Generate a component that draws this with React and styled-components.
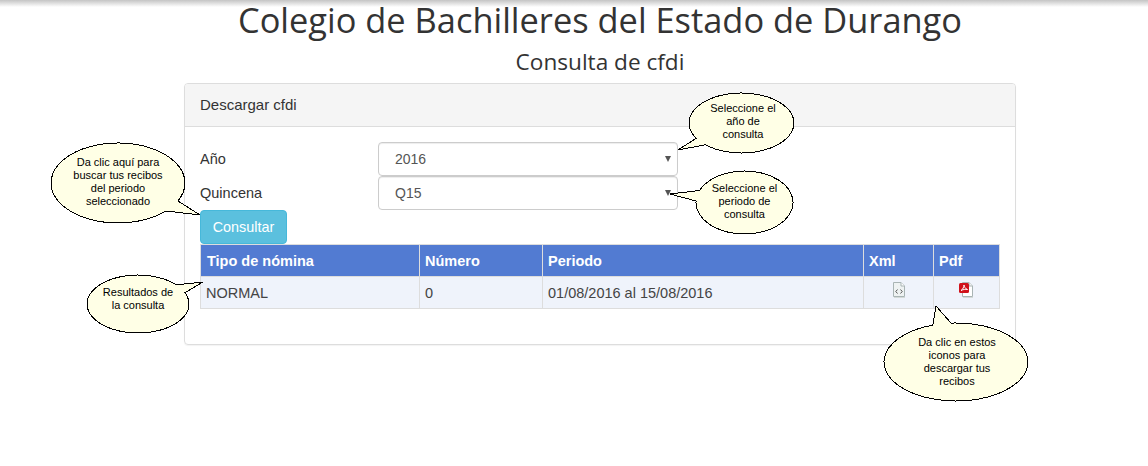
import React from "react";
import styled, { createGlobalStyle } from "styled-components";

const Global = createGlobalStyle`
  html, body { margin: 0; padding: 0; background: #fff; }
  body { font-family: "Liberation Sans", Arial, sans-serif; font-size: 14.5px; color: #333; overflow: hidden; }
  * { box-sizing: border-box; }
`;

const Page = styled.div`
  position: relative;
  width: 1148px;
  height: 466px;
  overflow: hidden;
  padding-left: 184px;
`;
const TopShade = styled.div`
  position: absolute;
  left: 0; right: 0; top: 0;
  height: 7px;
  background: linear-gradient(#c4c4c4, #fff);
`;
const Column = styled.main`
  width: 832px;
`;
const Title = styled.h1`
  margin: 0;
  height: 43px;
  font-family: "Open Sans", sans-serif;
  font-weight: 400;
  font-size: 34.4px;
  line-height: 40px;
  text-align: center;
  color: #333;
  white-space: nowrap;
`;
const Subtitle = styled.h2`
  margin: 0 0 5px;
  height: 35px;
  font-family: "Open Sans", sans-serif;
  font-weight: 400;
  font-size: 22.6px;
  line-height: 38px;
  text-align: center;
  color: #333;
`;
const Panel = styled.section`
  height: 262px;
  border: 1px solid #ddd;
  border-radius: 4px;
  box-shadow: 0 1px 1px rgba(0,0,0,.05);
`;
const PanelHead = styled.div`
  height: 43px;
  padding: 0 15px;
  font-size: 15px;
  line-height: 42px;
  background: #f5f5f5;
  border-bottom: 1px solid #ddd;
  border-radius: 3px 3px 0 0;
`;
const PanelBody = styled.div`
  padding: 15px 15px 0;
`;
const FormRow = styled.div`
  display: flex;
  align-items: center;
  height: 34px;
`;
const Label = styled.label`
  width: 178px;
  flex: none;
`;
const SelectWrap = styled.div`
  position: relative;
  width: 300px;
  height: 34px;
  &::after {
    content: "";
    position: absolute;
    right: 7px;
    top: 14px;
    border-left: 3px solid transparent;
    border-right: 3px solid transparent;
    border-top: 6px solid #555;
  }
`;
const Select = styled.select`
  appearance: none;
  display: block;
  width: 100%;
  height: 100%;
  padding: 0 16px;
  font: inherit;
  font-size: 14px;
  color: #555;
  background: #fff;
  border: 1px solid #ccc;
  border-radius: 4px;
  box-shadow: inset 0 1px 1px rgba(0,0,0,.075);
`;
const Button = styled.button`
  display: block;
  width: 87px;
  height: 34px;
  padding: 0;
  font: inherit;
  font-size: 14.4px;
  color: #fff;
  background: #5bc0de;
  border: 1px solid #46b8da;
  border-radius: 4px;
`;
const Table = styled.table`
  width: 800px;
  border-collapse: collapse;
  table-layout: fixed;
  border: 1px solid #ddd;
`;
const Th = styled.th`
  height: 32px;
  padding: 0 5px;
  text-align: left;
  font-weight: 700;
  color: #fff;
  background: #527bd2;
  border: 1px solid #ddd;
  border-top: 0;
  &:first-child { padding-left: 6px; }
`;
const Td = styled.td`
  height: 32px;
  padding: 0 5px;
  background: #eff3fb;
  border: 1px solid #ddd;
  color: #444;
`;
const IconCell = styled(Td)`
  text-align: center;
  vertical-align: top;
  padding-top: 5px;
`;
const IconLink = styled.a`
  display: inline-block;
  line-height: 0;
`;
const Bubble = styled.div`
  position: absolute;
  left: ${p => p.$cx - p.$rx}px;
  top: ${p => p.$cy - p.$ry}px;
  width: ${p => p.$rx * 2}px;
  height: ${p => p.$ry * 2}px;
  display: flex;
  align-items: center;
  justify-content: center;
  text-align: center;
  font-family: "Liberation Sans", sans-serif;
  font-size: 11px;
  line-height: 13px;
  color: #000;
  white-space: nowrap;
  padding-bottom: ${p => p.$lift * 2}px;
  padding-left: ${p => p.$shift * 2}px;
`;
const BubbleShape = styled.svg`
  position: absolute;
  left: 0;
  top: 0;
  overflow: visible;
`;
const BubbleText = styled.span`
  position: relative;
`;

function Callout({ cx, cy, rx, ry, a, b, tip, lift = 0, shift = 0, lines }) {
  const angle = p => Math.atan2((p[1] - cy) / ry, (p[0] - cx) / rx);
  const on = t => [rx + rx * Math.cos(t), ry + ry * Math.sin(t)];
  const ta = angle(a), tb = angle(b);
  const pa = on(ta), pb = on(tb);
  const delta = (tb - ta + Math.PI * 2) % (Math.PI * 2);
  const sweep = delta > Math.PI ? 1 : 0;
  const d = `M${pa[0]} ${pa[1]} A${rx} ${ry} 0 1 ${sweep} ${pb[0]} ${pb[1]} L${tip[0] - cx + rx} ${tip[1] - cy + ry} Z`;
  return (
    <Bubble $cx={cx} $cy={cy} $rx={rx} $ry={ry} $lift={lift} $shift={shift}>
      <BubbleShape width={rx * 2} height={ry * 2}>
        <path d={d} fill="#ffffe6" stroke="#000" strokeWidth="1" shapeRendering="crispEdges" />
      </BubbleShape>
      <BubbleText>
        {lines.map((l, i) => <React.Fragment key={i}>{i > 0 && <br />}{l}</React.Fragment>)}
      </BubbleText>
    </Bubble>
  );
}

const XmlIcon = () => (
  <svg width="14" height="16" viewBox="0 0 14 16">
    <path d="M1.5.5H9L12.5 4V14.5H1.5Z" fill="#eef2f2" stroke="#a9b4b4" />
    <path d="M9 .5V4H12.5" fill="#fff" stroke="#a9b4b4" />
    <path d="M5.5 7.5 3.8 9.5 5.5 11.5M8.5 7.5 10.2 9.5 8.5 11.5" fill="none" stroke="#555" />
    <path d="M2 15.5H13" stroke="#d4dad8" />
  </svg>
);
const PdfIcon = () => (
  <svg width="15" height="16" viewBox="0 0 15 16">
    <path d="M3.5.5H10L13.5 4V14.5H3.5Z" fill="#fff" stroke="#a9b4b4" />
    <path d="M10 .5V4H13.5" fill="#f2f2f2" stroke="#a9b4b4" />
    <rect x="0" y="1" width="10" height="10" rx="1.5" fill="#d0121b" />
    <path d="M2 8.5C4 7.5 5 4.5 5 3C5 4.5 6.5 7 8.5 7.5C6.5 7 4 7.5 2 8.5Z" fill="none" stroke="#fff" strokeWidth="1" />
    <path d="M4 15.5H14" stroke="#d4dad8" />
  </svg>
);

export default function App() {
  return (
    <Page>
      <Global />
      <TopShade />
      <Column>
        <Title>Colegio de Bachilleres del Estado de Durango</Title>
        <Subtitle>Consulta de cfdi</Subtitle>
        <Panel>
          <PanelHead>Descargar cfdi</PanelHead>
          <PanelBody>
            <FormRow>
              <Label>Año</Label>
              <SelectWrap>
                <Select defaultValue="2016"><option>2016</option></Select>
              </SelectWrap>
            </FormRow>
            <FormRow>
              <Label>Quincena</Label>
              <SelectWrap>
                <Select defaultValue="Q15"><option>Q15</option></Select>
              </SelectWrap>
            </FormRow>
            <Button>Consultar</Button>
            <Table>
              <colgroup>
                <col width="219" /><col width="123" /><col width="321" /><col width="70" /><col width="66" />
              </colgroup>
              <thead>
                <tr>
                  <Th>Tipo de nómina</Th><Th>Número</Th><Th>Periodo</Th><Th>Xml</Th><Th>Pdf</Th>
                </tr>
              </thead>
              <tbody>
                <tr>
                  <Td>NORMAL</Td>
                  <Td>0</Td>
                  <Td>01/08/2016 al 15/08/2016</Td>
                  <IconCell><IconLink href="#"><XmlIcon /></IconLink></IconCell>
                  <IconCell><IconLink href="#"><PdfIcon /></IconLink></IconCell>
                </tr>
              </tbody>
            </Table>
          </PanelBody>
        </Panel>
      </Column>
      <Callout cx={741.5} cy={123} rx={52.5} ry={30} a={[697, 138]} b={[705, 145]} tip={[678, 150]} lift={2} shift={1.5} lines={["Seleccione el", "año de", "consulta"]} />
      <Callout cx={744.5} cy={202.5} rx={48.5} ry={31.5} a={[698, 190]} b={[695, 201]} tip={[670, 194]} lift={1.5} lines={["Seleccione el", "periodo de", "consulta"]} />
      <Callout cx={118} cy={183} rx={67} ry={40} a={[178, 201]} b={[166, 211]} tip={[200, 215]} lift={1.5} lines={["Da clic aquí para", "buscar tus recibos", "del periodo", "seleccionado"]} />
      <Callout cx={138} cy={304} rx={51} ry={29} a={[176, 285]} b={[184, 293]} tip={[203, 282]} lift={5} lines={["Resultados de", "la consulta"]} />
      <Callout cx={956} cy={362} rx={72} ry={39} a={[934, 327]} b={[951, 323]} tip={[936, 306]} shift={1} lines={["Da clic en estos", "iconos para", "descargar tus", "recibos"]} />
    </Page>
  );
}
